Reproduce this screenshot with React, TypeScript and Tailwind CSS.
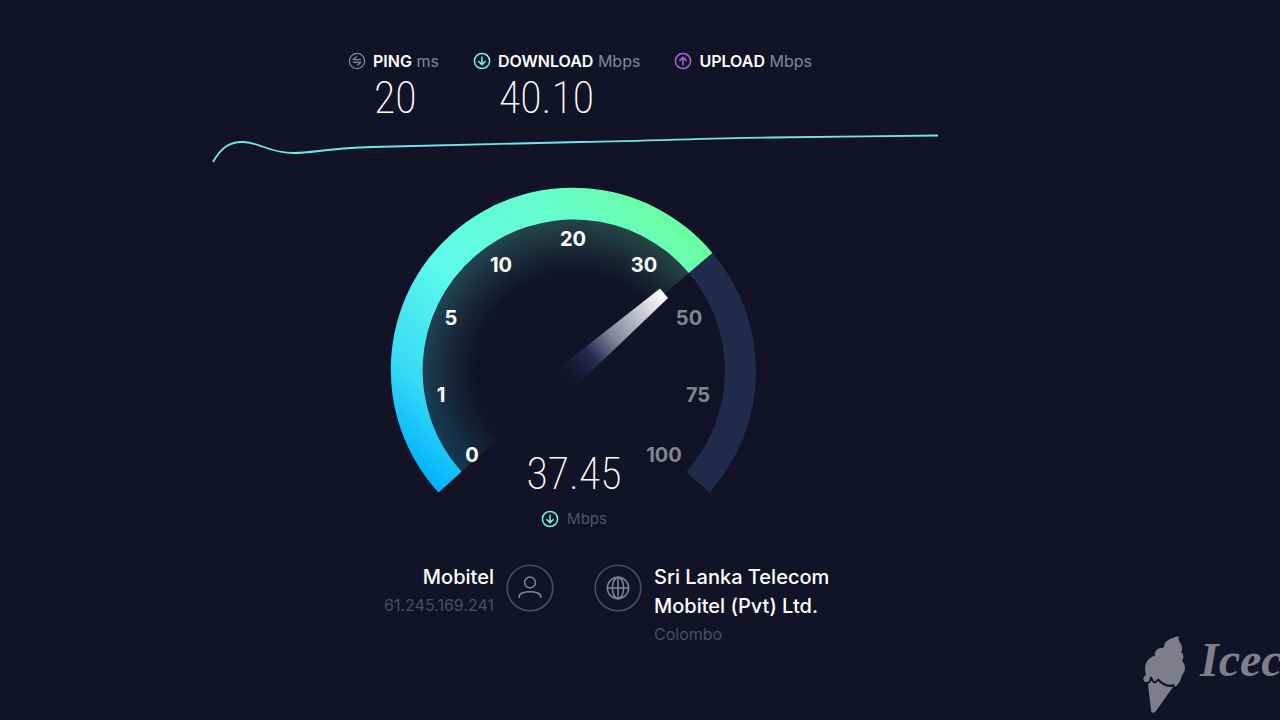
import type { ReactNode } from "react";

const labels = [
  { value: "0", x: 472, y: 461, passed: true },
  { value: "1", x: 441, y: 401, passed: true },
  { value: "5", x: 451, y: 324, passed: true },
  { value: "10", x: 501, y: 271, passed: true },
  { value: "20", x: 573, y: 245, passed: true },
  { value: "30", x: 644, y: 271, passed: true },
  { value: "50", x: 689, y: 324, passed: false },
  { value: "75", x: 698, y: 401, passed: false },
  { value: "100", x: 664, y: 461, passed: false },
];

function PingIcon() {
  return (
    <svg viewBox="0 0 18 18" className="size-[18px] text-[#85859a]" fill="none" stroke="currentColor" strokeWidth="1.3">
      <circle cx="9" cy="9" r="7.6" />
      <path d="M13 7.7H5L8.800 4.600M5 10.300H13L9.200 13.400" strokeLinejoin="round" />
    </svg>
  );
}

function DownIcon() {
  return (
    <svg viewBox="0 0 18 18" className="size-[18px] text-[#6df5e0]" fill="none" stroke="currentColor" strokeWidth="1.5">
      <circle cx="9" cy="9" r="7.6" />
      <path d="M9 5V12.4M5.9 9.6L9 12.6L12.1 9.6" strokeLinecap="round" strokeLinejoin="round" />
    </svg>
  );
}

function UpIcon() {
  return (
    <svg viewBox="0 0 18 18" className="size-[18px] text-[#a862e0]" fill="none" stroke="currentColor" strokeWidth="1.5">
      <circle cx="9" cy="9" r="7.6" />
      <path d="M9 13V5.6M5.9 8.4L9 5.4L12.1 8.4" strokeLinecap="round" strokeLinejoin="round" />
    </svg>
  );
}

function Result({ icon, name, unit, value }: { icon: ReactNode; name: string; unit: string; value?: string }) {
  return (
    <div>
      <div className="flex items-center gap-[7px] text-[16px] leading-[18px]">
        {icon}
        <p className="text-[#85859a]">
          <span className="font-semibold text-white">{name}</span> {unit}
        </p>
      </div>
      {value && (
        <p className="pl-[26px] font-['Roboto_Condensed','Liberation_Sans_Narrow',sans-serif] text-[44px] leading-[56px] font-extralight text-white">
          {value}
        </p>
      )}
    </div>
  );
}

function Gauge() {
  return (
    <svg viewBox="390 186 368 308" className="w-[368px] max-w-full font-['Inter',sans-serif]">
      <defs>
        <linearGradient id="speed" gradientUnits="userSpaceOnUse" x1="439" y1="491" x2="690" y2="215">
          <stop offset="0" stopColor="#00b2ff" />
          <stop offset="0.18" stopColor="#38daf5" />
          <stop offset="0.46" stopColor="#5ffbea" />
          <stop offset="0.78" stopColor="#66fccb" />
          <stop offset="0.96" stopColor="#6bfda3" />
        </linearGradient>
        <radialGradient id="fade" gradientUnits="userSpaceOnUse" cx="574" cy="370" r="151">
          <stop offset="0.64" stopColor="#fff" stopOpacity="0" />
          <stop offset="0.82" stopColor="#fff" stopOpacity="0.1" />
          <stop offset="1" stopColor="#fff" stopOpacity="0.22" />
        </radialGradient>
        <mask id="glow">
          <path d="M574 370L461.600 470.800A151 151 0 1 1 688.800 271.900Z" fill="url(#fade)" />
        </mask>
        <linearGradient id="needle" gradientUnits="userSpaceOnUse" x1="664" y1="292" x2="564" y2="379">
          <stop offset="0" stopColor="#fff" />
          <stop offset="0.15" stopColor="#dcdce2" />
          <stop offset="0.5" stopColor="#85869a" />
          <stop offset="0.72" stopColor="#252e52" />
          <stop offset="1" stopColor="#1b1d38" stopOpacity="0" />
        </linearGradient>
      </defs>
      <path d="M712.400 251.900A182 182 0 0 1 709.500 491.500L686.400 470.800A151 151 0 0 0 688.800 271.900Z" fill="#212c4d" />
      <rect x="390" y="186" width="368" height="308" fill="url(#speed)" mask="url(#glow)" />
      <path d="M438.500 491.500A182 182 0 1 1 712.400 251.900L688.800 271.900A151 151 0 1 0 461.600 470.800Z" fill="url(#speed)" />
      <path d="M660 287.500L668 297L572 389L555 370Z" fill="url(#needle)" />
      {labels.map((label) => (
        <text
          key={label.value}
          x={label.x}
          y={label.y}
          textAnchor="middle"
          className={label.passed ? "fill-white text-[20px] font-bold" : "fill-[#85858f] text-[20px] font-bold"}
        >
          {label.value}
        </text>
      ))}
    </svg>
  );
}

function UserIcon() {
  return (
    <svg viewBox="0 0 48 48" className="mt-px size-12 shrink-0" fill="none">
      <circle cx="24" cy="24" r="22.800" stroke="#4d4d61" strokeWidth="1.600" />
      <g stroke="#85859a" strokeWidth="1.500">
        <circle cx="24" cy="18.500" r="5.400" />
        <path d="M13.200 34V32.500C13.200 29.500 18 27.700 24 27.700S34.800 29.500 34.800 32.500V34" />
      </g>
    </svg>
  );
}

function GlobeIcon() {
  return (
    <svg viewBox="0 0 48 48" className="mt-px size-12 shrink-0" fill="none">
      <circle cx="24" cy="24" r="22.800" stroke="#4d4d61" strokeWidth="1.600" />
      <g stroke="#85859a" strokeWidth="1.500">
        <circle cx="24" cy="24" r="10.700" />
        <ellipse cx="24" cy="24" rx="5.600" ry="10.700" />
        <path d="M24 13.300V34.700M13.300 24H34.700" />
      </g>
    </svg>
  );
}

function Watermark() {
  return (
    <div className="absolute right-0 bottom-0 flex w-[138px] items-start gap-3 overflow-hidden text-[#7f7f8c]">
      <svg viewBox="1142 634 46 80" className="mb-1.5 h-20 w-[46px] shrink-0" fill="currentColor">
        <path d="M1179 636C1177 641 1182 643 1182 648C1182 650 1182 651 1181 652C1184 654 1184 658 1182 661C1186 665 1186 671 1182 675C1181 680 1179 684 1175 687L1174 684C1168 686 1163 683 1159 679C1157 677 1156 683 1154 681C1152 679 1153 676 1150 677C1149 680 1150 682 1146 682C1142 681 1143 677 1146 675C1145 671 1144 663 1149 659C1151 657 1153 656 1155 656C1154 652 1157 649 1160 648C1162 648 1163 648 1164 647C1164 640 1172 638 1179 636Z" />
        <path d="M1148 684C1151 683 1151 680 1152 681C1153 684 1156 684 1158 681C1163 686 1167 687 1173 687L1156 711C1154 714 1151 713 1151 710Z" />
      </svg>
      <p className="font-['Liberation_Serif',serif] text-[48px] leading-[52px] font-bold italic">Icec</p>
    </div>
  );
}

export default function App() {
  return (
    <main className="relative flex min-h-screen flex-col items-center overflow-hidden bg-[#121326] pt-[52px] pr-[132px] font-['Inter',sans-serif]">
      <section className="flex gap-[34px] pl-3">
        <Result icon={<PingIcon />} name="PING" unit="ms" value="20" />
        <Result icon={<DownIcon />} name="DOWNLOAD" unit="Mbps" value="40.10" />
        <Result icon={<UpIcon />} name="UPLOAD" unit="Mbps" />
      </section>

      <svg viewBox="210 130 728 36" className="mt-1 w-[728px] max-w-full" fill="none">
        <path
          d="M213 162C221 148 229 142 242 142C260 142 268 153 294 153C312 153 330 148 372 147C440 146 510 144 580 142C660 141 700 138 770 137.500C830 137 880 136 938 135.500"
          stroke="#6ee8e8"
          strokeWidth="1.800"
        />
      </svg>

      <section className="mt-[21px] flex flex-col items-center">
        <Gauge />
        <p className="-mt-[49px] font-['Roboto_Condensed','Liberation_Sans_Narrow',sans-serif] text-[44px] leading-[56px] font-extralight text-white">
          37.45
        </p>
        <div className="mt-2 flex items-center gap-2 text-[15px] leading-[18px] text-[#54546a]">
          <DownIcon />
          <p>Mbps</p>
        </div>
      </section>

      <section className="mt-[35px] grid grid-cols-2 gap-10">
        <div className="flex items-start justify-end gap-3 text-right">
          <div>
            <h2 className="text-[20px] leading-[29px] font-medium text-white">Mobitel</h2>
            <p className="text-[16px] leading-[27px] text-[#4d4d61]">61.245.169.241</p>
          </div>
          <UserIcon />
        </div>
        <div className="flex items-start gap-3">
          <GlobeIcon />
          <div>
            <h2 className="text-[20px] leading-[29px] font-medium text-white">
              Sri Lanka Telecom
              <br />
              Mobitel (Pvt) Ltd.
            </h2>
            <p className="text-[16px] leading-[27px] text-[#4d4d61]">Colombo</p>
          </div>
        </div>
      </section>

      <Watermark />
    </main>
  );
}
